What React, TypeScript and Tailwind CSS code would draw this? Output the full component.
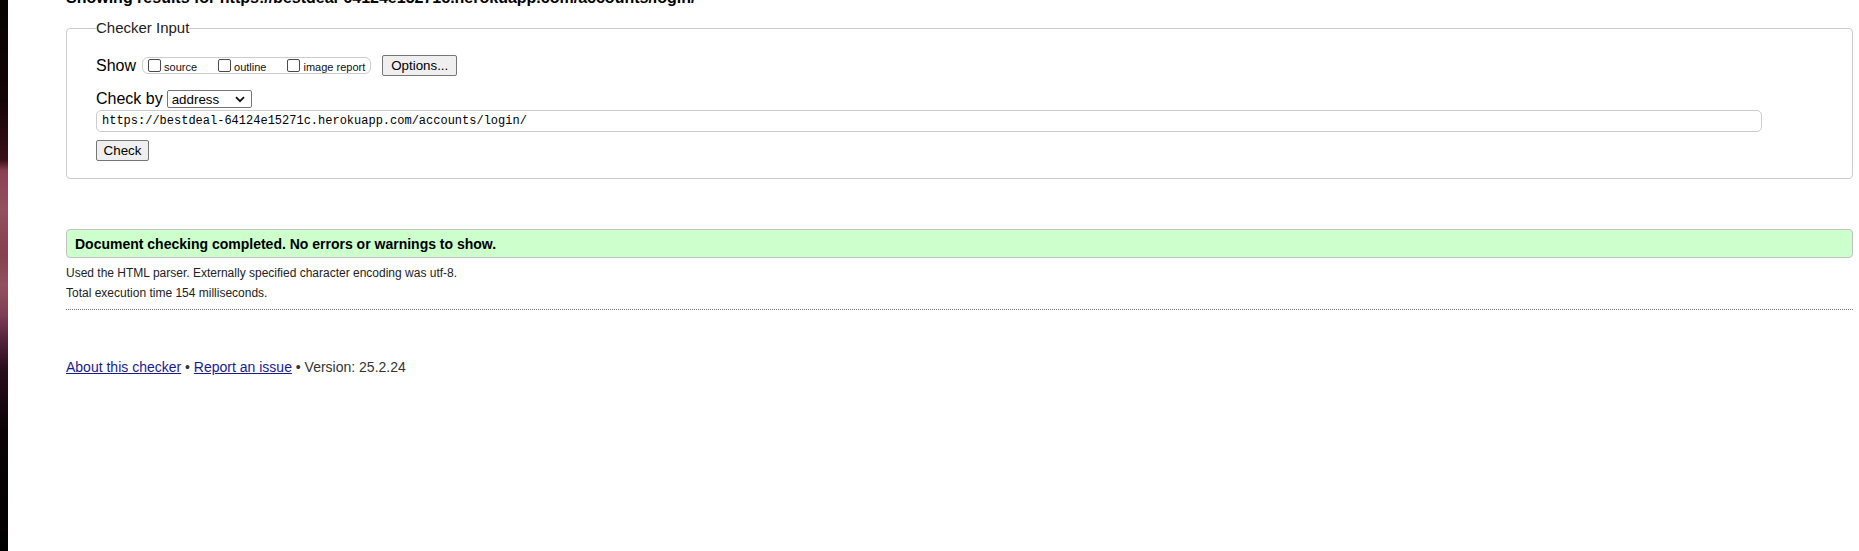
import React from "react";

const sans = "font-['Liberation_Sans',Arial,sans-serif]";

function Box({ label, first }: { label: string; first?: boolean }) {
  return (
    <span className={`flex items-center ${first ? "" : "ml-[21px]"}`}>
      <span className="inline-block w-[13px] h-[13px] border border-[#4a4a4a] rounded-[2px] bg-white" />
      <span className="ml-[3px] text-[11px] leading-[13px] translate-y-[2px] text-[#111]">{label}</span>
    </span>
  );
}

export default function App() {
  return (
    <div className={`flex w-full min-h-[551px] bg-white ${sans}`}>
      <div className="w-[8px] shrink-0 bg-[linear-gradient(to_bottom,#080202_0%,#140406_18%,#2c0a12_25%,#3a1018_29%,#8a4252_31%,#94505e_38%,#86404e_46%,#92505e_52%,#7e4056_57%,#5a2642_61%,#2a0c1a_67%,#0c0206_78%,#000000_100%)]" />
      <div className="flex-1 pl-[58px] pr-[6px] overflow-hidden">
        <h2 className="mt-[-12px] text-[16px] leading-[20px] font-bold text-black whitespace-nowrap">
          Showing results for https://bestdeal-64124e15271c.herokuapp.com/accounts/login/
        </h2>

        <fieldset className="mt-[11px] border border-[#cccccc] rounded-[4px] pl-[29px] pr-[90px] pt-[18px] pb-[17px]">
          <legend className="text-[15px] leading-[18px] text-[#222] px-0">Checker Input</legend>

          <div className="flex items-center h-[21px]">
            <span className="text-[16px] leading-[20px] text-black">Show</span>
            <div className="ml-[6px] flex items-center h-[17px] border border-[#cccccc] rounded-[6px] pl-[5px] pr-[5px]">
              <Box label="source" first />
              <Box label="outline" />
              <Box label="image report" />
            </div>
            <button className="ml-[11px] w-[75px] h-[21px] border border-[#767676] rounded-[2px] bg-[#efefef] text-[13.33px] leading-[15px] text-black">
              Options...
            </button>
          </div>

          <div className="mt-[14px] flex items-center h-[18px]">
            <span className="text-[16px] leading-[18px] text-black">Check by</span>
            <div className="ml-[4px] w-[85px] h-[18px] border border-[#767676] rounded-[2px] bg-white flex items-center justify-between pl-[4px] pr-[6px]">
              <span className="text-[13.33px] leading-[15px] text-black">address</span>
              <svg width="10" height="7" viewBox="0 0 10 7" className="shrink-0">
                <path d="M1 1.2 L5 5.2 L9 1.2" fill="none" stroke="#111" strokeWidth="1.8" />
              </svg>
            </div>
          </div>

          <div className="mt-[2px] w-full h-[22px] border border-[#cccccc] rounded-[5px] flex items-center pl-[5px]">
            <span className="font-['Liberation_Mono',monospace] text-[12px] leading-[14px] text-black">
              https://bestdeal-64124e15271c.herokuapp.com/accounts/login/
            </span>
          </div>

          <button className="mt-[8px] block w-[53px] h-[21px] border border-[#767676] rounded-[2px] bg-[#efefef] text-[13.33px] leading-[15px] text-black">
            Check
          </button>
        </fieldset>

        <div className="mt-[50px] h-[29px] border border-[#c2c2c2] rounded-[4px] bg-[#ccffcc] flex items-center pl-[8px]">
          <span className="text-[14px] leading-[16px] font-bold text-black">
            Document checking completed. No errors or warnings to show.
          </span>
        </div>

        <p className="mt-[5px] text-[12px] leading-[20px] text-[#222]">
          Used the HTML parser. Externally specified character encoding was utf-8.
        </p>
        <p className="text-[12px] leading-[20px] text-[#222]">Total execution time 154 milliseconds.</p>

        <div className="mt-[6px] border-t border-dotted border-[#777]" />

        <p className="mt-[48px] text-[14px] leading-[18px] text-[#333]">
          <a className="underline text-[#1a1a8f]" href="#">About this checker</a>
          {" • "}
          <a className="underline text-[#1a1a8f]" href="#">Report an issue</a>
          {" • Version: 25.2.24"}
        </p>
      </div>
    </div>
  );
}
